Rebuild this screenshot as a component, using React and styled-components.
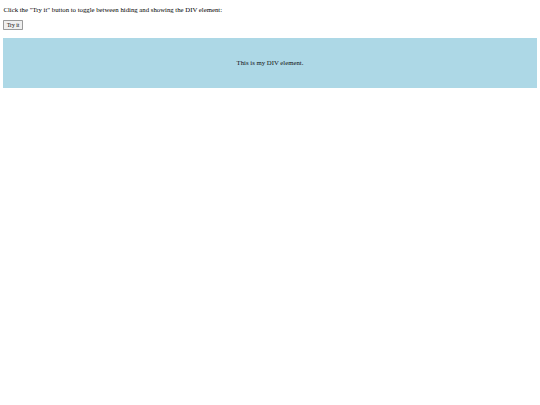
import React, { useState } from 'react'
import styled, { createGlobalStyle } from 'styled-components'

// the reference is a 1280px-wide page shown at 540px, so every size is scaled by 0.421875
const GlobalStyle = createGlobalStyle`
  body {
    margin: 0 3.4px;
    padding-top: 5.8px;
    font-family: "Liberation Serif", "Times New Roman", serif;
    font-size: 6.75px;
    color: #000000;
    background: #ffffff;
  }
`

const Intro = styled.p`
  margin: 0 0 6.8px 0;
  line-height: 7.8px;
`

const ButtonRow = styled.div`
  display: flex;
  height: 9.6px;
  align-items: flex-start;
`

const TryButton = styled.button`
  font-family: "Liberation Serif", "Times New Roman", serif;
  font-size: 5.6px;
  line-height: 6.6px;
  padding: 0.4px 2.5px;
  margin: 0;
  background: #efefef;
  color: #000000;
  border: 0.8px solid #9a9a9a;
  border-radius: 0.8px;
  cursor: pointer;
`

const Panel = styled.div`
  box-sizing: border-box;
  width: 100%;
  height: 49.5px;
  margin-top: 8.2px;
  display: ${props => (props.$hidden ? 'none' : 'flex')};
  align-items: center;
  justify-content: center;
  background-color: lightblue;
  color: #111111;
`

export default function App () {
  const [isVisible, setIsVisible] = useState(true)

  return (
    <>
      <GlobalStyle />
      <Intro>Click the "Try it" button to toggle between hiding and showing the DIV element:</Intro>
      <ButtonRow>
        <TryButton onClick={() => setIsVisible(!isVisible)}>Try it</TryButton>
      </ButtonRow>
      <Panel $hidden={!isVisible}>This is my DIV element.</Panel>
    </>
  )
}
